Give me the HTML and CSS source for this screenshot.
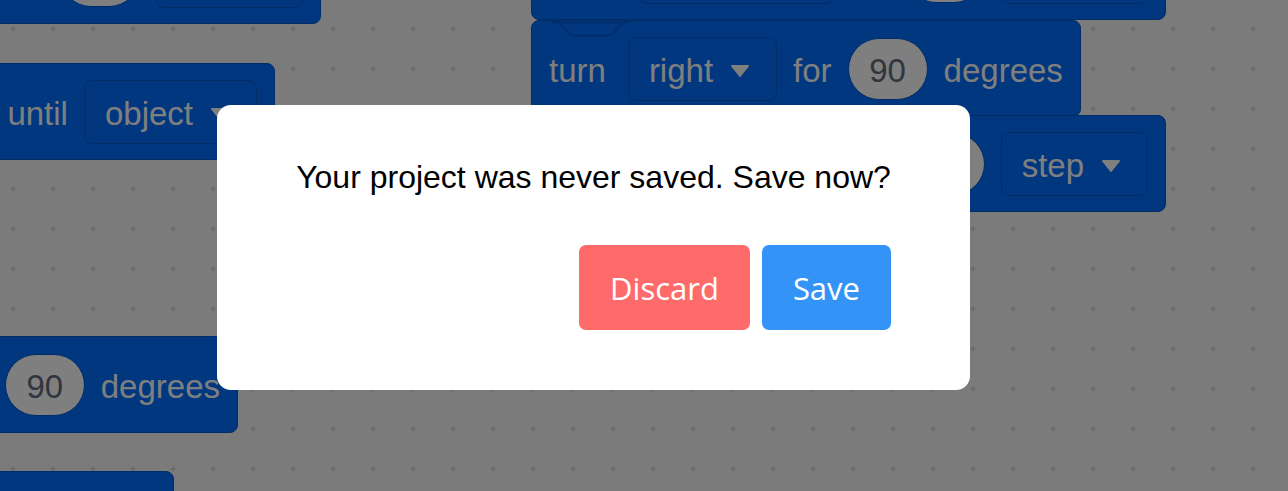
FILE: index.html
```html
<!DOCTYPE html>
<html lang="en">
<head>
  <meta charset="UTF-8">
  <meta name="viewport" content="width=device-width, initial-scale=1.0">
  <title>Unsaved project</title>
  <link rel="stylesheet" href="styles.css">
</head>
<body>
  <div id="workspace">
    <!-- dotted grid of the script area -->
    <svg class="grid" width="1288" height="491">
      <defs>
        <pattern id="cross" width="40" height="40" patternUnits="userSpaceOnUse">
          <path d="M10.5 29h5M13 26.5v5" stroke="#d4d4d4" stroke-width="1.6"/>
        </pattern>
      </defs>
      <rect width="100%" height="100%" fill="url(#cross)"/>
    </svg>

    <!-- Blocks -->
    <div class="block blk-e">
      <span>move</span>
      <span class="dropdown">forward <svg class="caret" viewBox="0 0 20 12"><path d="M2 1h16l-8 10z"/></svg></span>
      <span>for</span>
      <span class="pill">10</span>
      <span class="dropdown">step <svg class="caret" viewBox="0 0 20 12"><path d="M2 1h16l-8 10z"/></svg></span>
    </div>

    <div class="block blk-d">
      <span>repeat</span>
      <span>until</span>
      <span class="dropdown">object <svg class="caret" viewBox="0 0 20 12"><path d="M2 1h16l-8 10z"/></svg></span>
    </div>

    <div class="block blk-f">
      <span>turn</span>
      <span class="dropdown">left <svg class="caret" viewBox="0 0 20 12"><path d="M2 1h16l-8 10z"/></svg></span>
      <span>for</span>
      <span class="pill">90</span>
      <span>degrees</span>
    </div>

    <div class="block blk-g">
      <span>wait</span>
      <span class="pill">1</span>
      <span>seconds</span>
    </div>

    <div class="block blk-a">
      <span>move</span>
      <span class="dropdown">forward <svg class="caret" viewBox="0 0 20 12"><path d="M2 1h16l-8 10z"/></svg></span>
      <span>for</span>
      <span class="pill">10</span>
      <span class="dropdown">step <svg class="caret" viewBox="0 0 20 12"><path d="M2 1h16l-8 10z"/></svg></span>
    </div>

    <div class="block blk-b">
      <svg class="notch" width="84" height="18">
        <rect x="4" y="0" width="76" height="2.5" fill="#006eff"/>
        <path d="M0 0.75H4C8 0.75 10 3 13 6L20 13.5Q22 15.5 25 15.5H59Q62 15.5 64 13.5L71 6C74 3 76 0.75 80 0.75H84"/>
      </svg>
      <span class="lead">turn</span>
      <span class="dropdown">right <svg class="caret" viewBox="0 0 20 12"><path d="M2 1h16l-8 10z"/></svg></span>
      <span>for</span>
      <span class="pill">90</span>
      <span>degrees</span>
    </div>

    <div class="block blk-c">
      <span>move</span>
      <span class="dropdown">backward <svg class="caret" viewBox="0 0 20 12"><path d="M2 1h16l-8 10z"/></svg></span>
      <span>for</span>
      <span class="pill">10</span>
      <span class="dropdown">step <svg class="caret" viewBox="0 0 20 12"><path d="M2 1h16l-8 10z"/></svg></span>
    </div>
  </div>

  <!-- Save prompt -->
  <div id="overlay">
    <div class="modal">
      <p class="modal-text">Your project was never saved. Save now?</p>
      <div class="modal-actions">
        <button class="btn btn-discard">Discard</button>
        <button class="btn btn-save">Save</button>
      </div>
    </div>
  </div>
</body>
</html>
```

FILE: styles.css
```css
/* General Styling */
body {
  margin: 0;
  padding: 0;
  overflow: hidden;
  font-family: 'Liberation Sans', Arial, sans-serif;
}

#workspace {
  position: relative;
  width: 1288px;
  height: 491px;
  overflow: hidden;
  background: #f6f6f6;
}

.grid {
  position: absolute;
  top: 0;
  left: 0;
}

/* Script blocks */
.block {
  position: absolute;
  box-sizing: border-box;
  height: 97px;
  display: flex;
  align-items: center;
  gap: 16px;
  padding: 0 17px;
  background: #006eff;
  border: 1.5px solid #0058d0;
  border-radius: 8px;
  color: #fff;
  font-size: 33px;
  white-space: nowrap;
}

/* glyphs sit a little below the middle of each block */
.block span {
  padding-top: 5px;
}

.block .lead {
  margin-right: 6px;
}

.blk-a {
  top: -77px;
  left: 531px;
  right: 122px;
  justify-content: flex-end;
}

.blk-b {
  top: 20px;
  left: 531px;
}

.blk-c {
  top: 115px;
  left: 531px;
  right: 122px;
  justify-content: flex-end;
}

.blk-d {
  top: 63px;
  right: 1013px;
}

.blk-e {
  top: -73px;
  right: 967px;
}

.blk-f {
  top: 336px;
  right: 1050px;
}

.blk-g {
  top: 471px;
  right: 1114px;
}

.notch {
  position: absolute;
  top: -1.5px;
  left: 17px;
  fill: none;
  stroke: #0058d0;
  stroke-width: 1.5;
}

.dropdown {
  box-sizing: border-box;
  height: 64px;
  display: flex;
  align-items: center;
  gap: 17px;
  padding: 0 26px 0 20px;
  border: 1.5px solid #0058d0;
  border-radius: 8px;
}

.caret {
  width: 20px;
  height: 12px;
  fill: #fff;
  stroke: #fff;
  stroke-width: 2;
  stroke-linejoin: round;
}

.pill {
  box-sizing: border-box;
  min-width: 80px;
  height: 62px;
  padding: 0 18px;
  display: flex;
  align-items: center;
  justify-content: center;
  background: #fff;
  border: 1px solid #0058d0;
  border-radius: 31px;
  color: #666b7d;
}

/* Modal */
#overlay {
  position: fixed;
  top: 0;
  left: 0;
  right: 0;
  bottom: 0;
  background: rgba(0, 0, 0, 0.5);
  display: flex;
  align-items: flex-start;
  padding: 105px 0 0 217px;
}

.modal {
  box-sizing: border-box;
  width: 753px;
  height: 285px;
  padding: 53px 60px 0 0;
  background: #fff;
  border-radius: 14px;
}

.modal-text {
  margin: 0 0 0 60px;
  text-align: center;
  font-size: 32px;
  line-height: 38px;
  color: #000;
}

.modal-actions {
  display: flex;
  justify-content: flex-end;
  gap: 12px;
  margin: 49px 19px 0 0;
}

.btn {
  height: 85px;
  padding: 0 31px;
  border: none;
  border-radius: 7px;
  color: #fff;
  font-family: 'Open Sans', sans-serif;
  font-size: 31px;
  cursor: pointer;
}

.btn-discard {
  background: #ff6a6b;
}

.btn-save {
  background: #3393f7;
}
```
